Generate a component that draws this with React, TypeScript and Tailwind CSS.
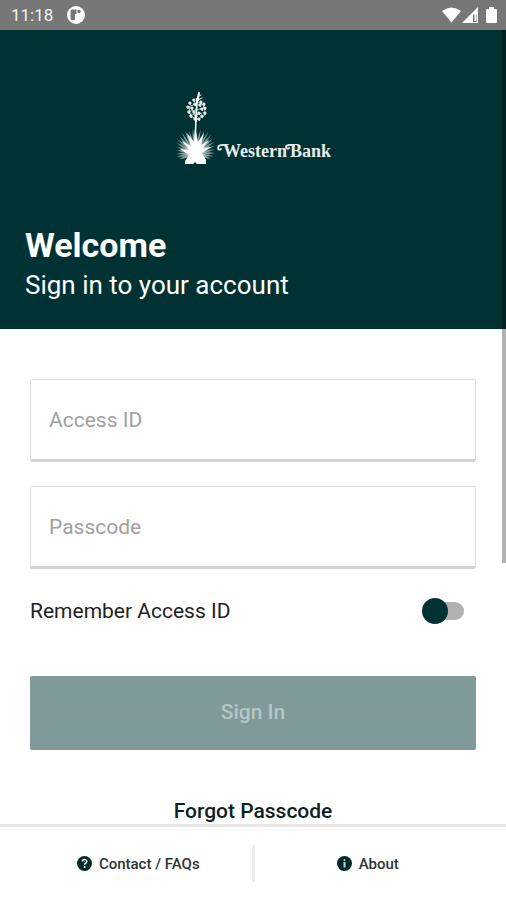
import { useState } from "react";
import type { ReactNode } from "react";

// [angle from vertical, length] of each agave leaf
const LEAVES = [
  [-108, 17], [-98, 19], [-88, 19], [-78, 19], [-68, 20], [-59, 22],
  [-50, 23], [-41, 24], [-32, 25], [-23, 25], [-14, 24], [-5, 25], [4, 24],
  [13, 25], [22, 25], [31, 26], [40, 25], [49, 24], [58, 23], [67, 22],
  [77, 20], [87, 20], [97, 19], [107, 17],
];

const BLOSSOMS = [
  [17, 9], [21, 8], [24, 11], [13, 12], [18, 13], [23, 14], [27, 13],
  [11, 16], [15, 17], [25, 18], [28, 17], [12, 21], [17, 21],
  [22, 22], [28, 22], [14, 25], [19, 25], [25, 25], [18, 28], [22, 28],
];

const BankLogo = () => (
  <svg
    width="156"
    height="76"
    viewBox="0 0 156 76"
    role="img"
    aria-label="WesternBank"
  >
    <g stroke="#fff" strokeLinecap="round" fill="none">
      <path d="M22 2l-2 9" strokeWidth="2" />
      <path d="M20 8l-1 22" strokeWidth="1.800" />
      <path d="M19 28l-1 24" strokeWidth="1.500" />
      <path
        d="M20 13l-7 2-1 6 3 5 6 2 6-3 1-7-3-5-5-2M19 19l-6 1M19 19l8-2M19 24l-5-1M19 24l6-2"
        strokeWidth="0.9"
        opacity="0.75"
      />
      <path d="M21 6l3-2M21 9l4-2" strokeWidth="0.9" />
    </g>
    <g fill="#fff" opacity="0.9">
      {BLOSSOMS.map(([x, y]) => (
        <path
          key={`${x}-${y}`}
          d={`M${x - 2} ${y}l1.200-1.600 1.600.4 1 1.400-1 .8.2 1.200-1.800-.6z`}
        />
      ))}
    </g>
    <g fill="#fff">
      {LEAVES.map(([angle, length]) => (
        <path
          key={angle}
          opacity="0.5"
          transform={`translate(18 63) rotate(${angle})`}
          d={`M-1.500 0L-.9-${length * 0.7} 0-${length} .9-${length * 0.7} 1.500 0z`}
        />
      ))}
      <path d="M3 58l9 1-7-9 9 5-4-13 7 9 1-14 3 14 6-9-3 12 8-5-6 8 8-1-9 6 4 7v4h-9l-2-2-2 2H8v-3l4-6z" />
    </g>
    <g
      fill="#e6ecec"
      fontFamily="'Liberation Serif', serif"
      fontWeight="700"
      fontSize="18"
    >
      <text x="46" y="66">Western</text>
      <text x="113" y="66">Bank</text>
    </g>
    <g fill="none" stroke="#e6ecec" strokeWidth="1.800" strokeLinecap="round">
      <path d="M49 55c-3-2-8-1-8 2 0 2 2 2 3 1" />
      <path d="M117 55c-3-2-8-1-8 1 0 2 2 2 3 1" />
    </g>
  </svg>
);

const StatusBar = () => (
  <div className="flex h-[30px] items-center justify-between bg-[#777777] pr-2 pl-[11px] text-white">
    <div className="flex items-center gap-3.5">
      <span className="text-[17px] leading-5 text-gray-100">11:18</span>
      <svg width="18" height="18" viewBox="0 0 18 18" aria-hidden="true">
        <circle cx="9" cy="9" r="9" fill="#fff" />
        <path d="M3.500 5q0-1.500 1.500-1.500h4.500V8H8v6H5q-1.500 0-1.500-1.500z" fill="#777" />
        <circle cx="12" cy="5.500" r="1.700" fill="#777" />
      </svg>
    </div>
    <svg width="56" height="18" viewBox="0 0 56 18" fill="#fff" aria-hidden="true">
      <path d="M0 5Q9.500-2 19 5L9.500 16.500z" />
      <path d="M36 1v16H20z" />
      <path d="M31 8.500h3.500V16H31z" fill="#777" />
      <path d="M32.500 8h1.500v7h-1.500z" />
      <path d="M47 1h5v2h2q1 0 1 1v12q0 1-1 1h-9q-1 0-1-1V4q0-1 1-1h2z" />
    </svg>
  </div>
);

interface FieldProps {
  label: string;
  type: string;
  value: string;
  onChange: (value: string) => void;
}

const Field = ({ label, type, value, onChange }: FieldProps) => (
  <input
    type={type}
    aria-label={label}
    placeholder={label}
    value={value}
    onChange={(e) => onChange(e.target.value)}
    className="h-[83px] w-full rounded-xs border border-b-3 border-[#dedede] border-b-[#d4d4d4] bg-white px-[18px] text-[21px] text-[#222222] outline-none placeholder:text-[#a0a0a0]"
  />
);

interface FooterLinkProps {
  href: string;
  icon: ReactNode;
  children: ReactNode;
}

const FooterLink = ({ href, icon, children }: FooterLinkProps) => (
  <a
    href={href}
    className="flex flex-1 items-center justify-center gap-[7px] text-[15px] leading-5 font-medium text-[#2d3535]"
  >
    <svg width="15" height="15" viewBox="0 0 15 15" aria-hidden="true">
      <circle cx="7.500" cy="7.500" r="7.500" fill="#012b2c" />
      {icon}
    </svg>
    {children}
  </a>
);

const App = () => {
  const [accessId, setAccessId] = useState("");
  const [passcode, setPasscode] = useState("");
  const [remember, setRemember] = useState(false);

  return (
    <div className="relative flex min-h-screen flex-col bg-white font-[Roboto,sans-serif]">
      <StatusBar />

      <header className="bg-[#003233] px-[25px] pt-[61px] pb-7">
        <div className="flex justify-center pl-1">
          <BankLogo />
        </div>
        <h1 className="mt-[58px] text-[34px] leading-10 font-bold text-white">
          Welcome
        </h1>
        <p className="mt-1 text-[26px] leading-8 text-white">
          Sign in to your account
        </p>
      </header>

      <form
        className="flex flex-1 flex-col px-[30px] pt-[50px]"
        onSubmit={(e) => e.preventDefault()}
      >
        <div className="flex flex-col gap-6">
          <Field
            label="Access ID"
            type="text"
            value={accessId}
            onChange={setAccessId}
          />
          <Field
            label="Passcode"
            type="password"
            value={passcode}
            onChange={setPasscode}
          />
        </div>

        <label className="mt-7 flex items-center justify-between pr-3 text-[21px] leading-7 text-[#222222]">
          Remember Access ID
          <span className="flex h-7 w-[42px] items-center">
            <input
              type="checkbox"
              role="switch"
              checked={remember}
              onChange={(e) => setRemember(e.target.checked)}
              className="peer sr-only"
            />
            <span className="z-10 size-[26px] shrink-0 rounded-full bg-[#003233] peer-checked:translate-x-4" />
            <span className="-ml-5 h-[18px] w-9 shrink-0 rounded-full bg-[#b2b2b2]" />
          </span>
        </label>

        <button
          type="submit"
          disabled={!accessId || !passcode}
          className="mt-[51px] h-[74px] w-full rounded-xs bg-[#003233] text-[21px] font-medium text-white disabled:bg-[#809999] disabled:text-[#b4c6c6]"
        >
          Sign In
        </button>

        <a
          href="#forgot"
          className="mt-[47px] -mb-1 self-center text-[21px] leading-7 font-medium text-[#0d1f1f]"
        >
          Forgot Passcode
        </a>
      </form>

      <footer className="flex h-[76px] items-center border-t-3 border-[#e8e8e8] bg-white px-[25px]">
        <FooterLink
          href="#contact"
          icon={
            <>
              <path
                d="M5.500 5.600c0-2.800 4.300-2.700 4.300-.2 0 1.700-2.200 1.600-2.200 3.400"
                fill="none"
                stroke="#fff"
                strokeWidth="1.500"
              />
              <circle cx="7.600" cy="11" r="1" fill="#fff" />
            </>
          }
        >
          Contact / FAQs
        </FooterLink>
        <div className="h-[37px] w-[3px] bg-[#ebebeb]" />
        <FooterLink
          href="#about"
          icon={
            <>
              <circle cx="7.500" cy="4" r="1" fill="#c8d4d4" />
              <path d="M6.500 6h2v5.500h-2z" fill="#c8d4d4" />
            </>
          }
        >
          About
        </FooterLink>
      </footer>

      {/* overlay scroll thumb */}
      <div className="absolute top-[30px] right-0 h-[533px] w-1 bg-black/30" />
    </div>
  );
};

export default App;
